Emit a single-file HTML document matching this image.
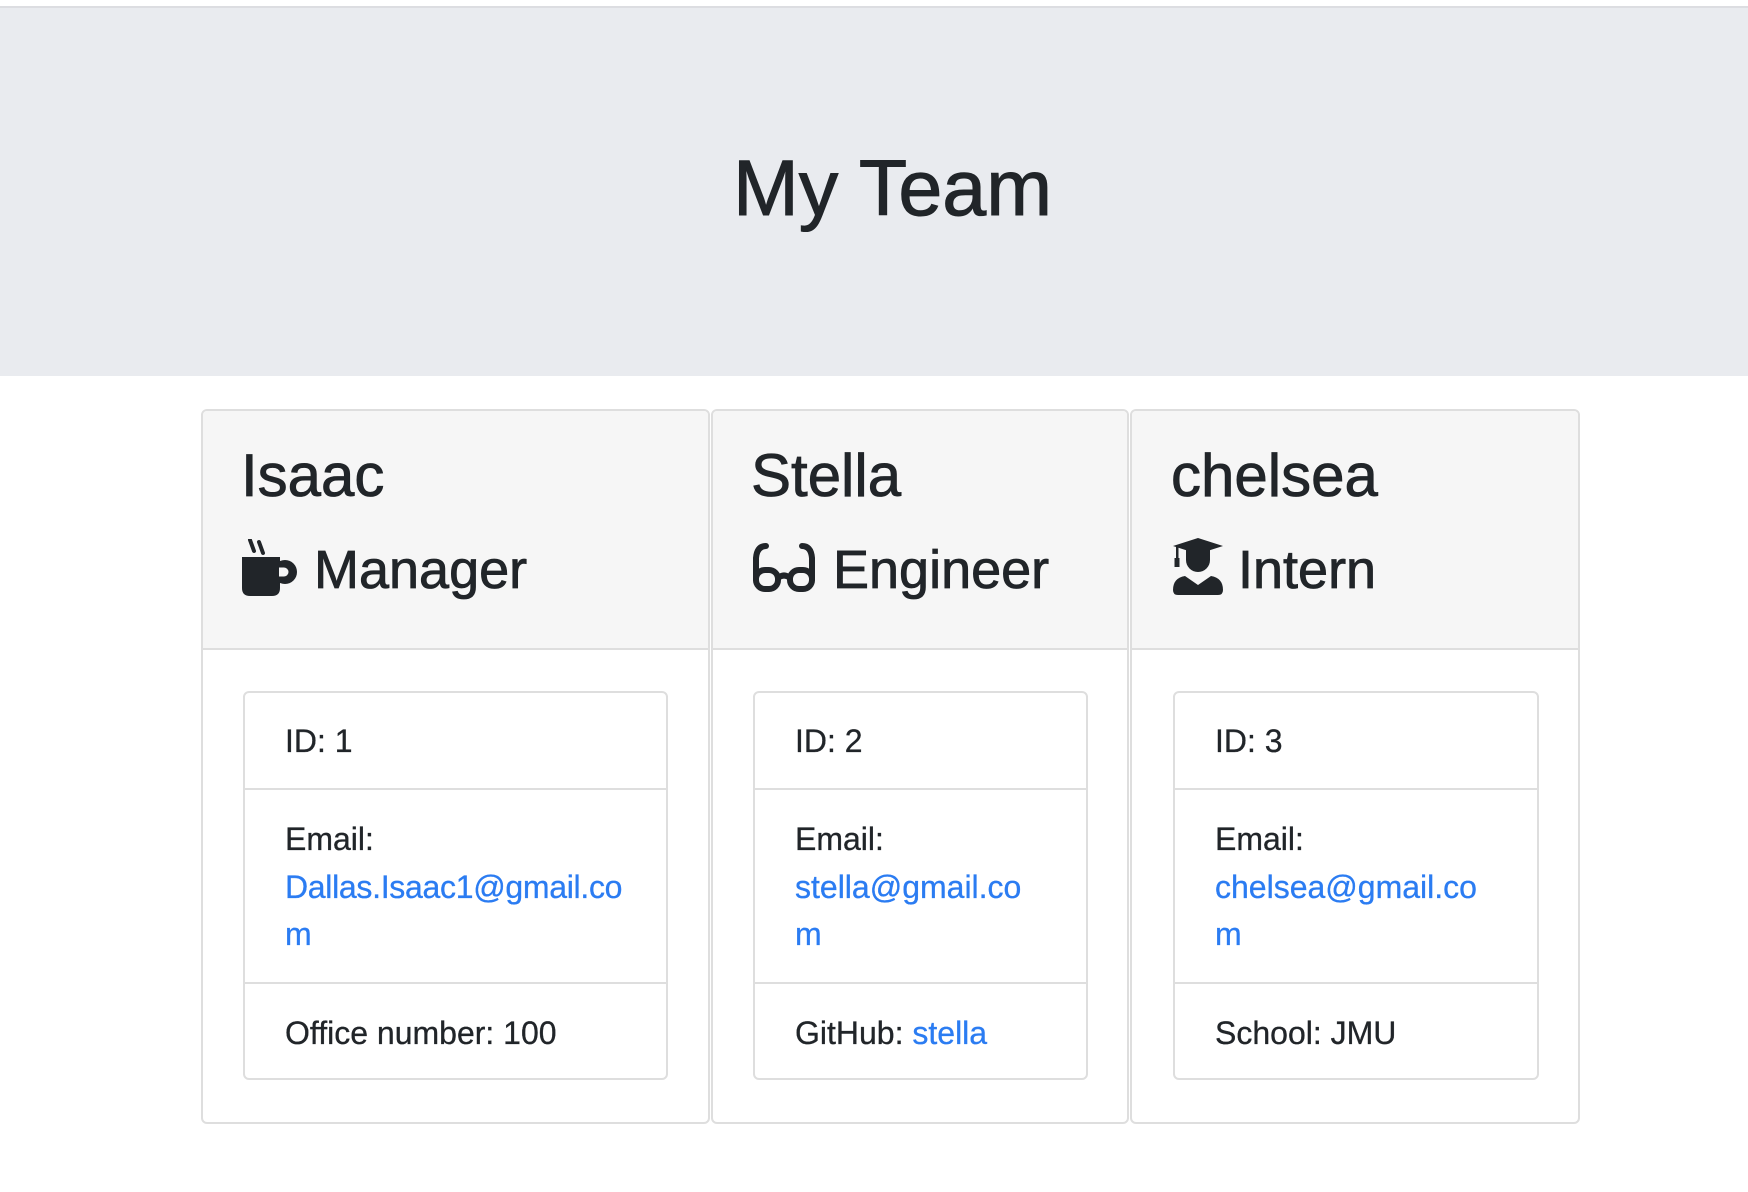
<!DOCTYPE html>
<html><head><meta charset="utf-8"><style>
*{margin:0;padding:0;box-sizing:border-box}
body{width:1748px;height:1192px;background:#fff;font-family:"Liberation Sans",Arial,sans-serif;color:#212529;position:relative;overflow:hidden}
.a{position:absolute;line-height:1;white-space:nowrap}
.jb{position:absolute;left:0;top:6px;width:1748px;height:370px;background:#e9ebef;border-top:2px solid #dcdde1}
.card{position:absolute;top:409px;height:715px;border:2px solid #dedede;border-radius:6px;background:#fff;overflow:hidden}
.hd{position:absolute;left:0;top:0;right:0;height:239px;background:#f6f6f6;border-bottom:2px solid #dedede}
.lst{position:absolute;top:691px;height:389px;border:2px solid #dedede;border-radius:6px}
.sep{position:absolute;height:2px;background:#dedede}
.n{font-size:60px;-webkit-text-stroke:0.8px #212529}
.r{font-size:54px;-webkit-text-stroke:0.8px #212529}
.t{font-size:32px;-webkit-text-stroke:0.3px currentColor}
.l{color:#2b7cf2}
</style></head><body>
<div class="jb"></div>
<div class="a" style="left:733px;top:148px;font-size:79px;-webkit-text-stroke:1px #212529">My Team</div>

<div class="card" style="left:201px;width:509px"><div class="hd"></div></div>
<div class="card" style="left:711px;width:418px"><div class="hd"></div></div>
<div class="card" style="left:1130px;width:450px"><div class="hd"></div></div>

<div class="a n" style="left:241px;top:446px">Isaac</div>
<div class="a n" style="left:751px;top:446px">Stella</div>
<div class="a n" style="left:1171px;top:446px">chelsea</div>

<svg style="position:absolute;left:242px;top:539px" width="56" height="57" viewBox="0 0 56 57">
<path d="M8 1 L12 12 M17 3 L21 14" stroke="#212529" stroke-width="4" stroke-linecap="round" fill="none"/>
<path d="M0 18 H38 V49 Q38 57 30 57 H8 Q0 57 0 49 Z" fill="#212529"/>
<circle cx="43" cy="33" r="12" fill="#212529"/><circle cx="42" cy="33" r="4.5" fill="#f6f6f6"/><rect x="37" y="28.5" width="5" height="9" fill="#f6f6f6"/>
</svg>
<div class="a r" style="left:314px;top:543px">Manager</div>

<svg style="position:absolute;left:752px;top:542px" width="64" height="51" viewBox="0 0 64 51">
<g stroke="#212529" stroke-width="6" fill="none" stroke-linecap="round">
<path d="M14 4 Q5 4 4 16 L4 38"/><path d="M50 4 Q59 4 60 16 L60 38"/>
<rect x="4" y="28" width="22" height="19" rx="9"/><rect x="38" y="28" width="22" height="19" rx="9"/>
<path d="M26 36 Q32 31 38 36"/>
</g></svg>
<div class="a r" style="left:833px;top:543px">Engineer</div>

<svg style="position:absolute;left:1173px;top:538px" width="50" height="58" viewBox="0 0 50 58">
<path d="M25 0 L50 8 L25 16 L0 8 Z" fill="#212529"/>
<rect x="3" y="8" width="2.5" height="16" fill="#212529"/><rect x="1.5" y="20" width="5" height="9" fill="#212529"/>
<path d="M13 12 H37 V22 A12 12 0 0 1 13 22 Z" fill="#212529"/>
<path d="M0 52 Q0 40 12 38 L25 47 L38 38 Q50 40 50 52 Q50 57 45 57 H5 Q0 57 0 52 Z" fill="#212529"/>
</svg>
<div class="a r" style="left:1238px;top:543px">Intern</div>

<div class="lst" style="left:243px;width:425px"></div>
<div class="sep" style="left:245px;width:421px;top:788px"></div>
<div class="sep" style="left:245px;width:421px;top:982px"></div>
<div class="lst" style="left:753px;width:335px"></div>
<div class="sep" style="left:755px;width:331px;top:788px"></div>
<div class="sep" style="left:755px;width:331px;top:982px"></div>
<div class="lst" style="left:1173px;width:366px"></div>
<div class="sep" style="left:1175px;width:362px;top:788px"></div>
<div class="sep" style="left:1175px;width:362px;top:982px"></div>

<div class="a t" style="left:285px;top:725px">ID: 1</div>
<div class="a t" style="left:285px;top:823px">Email:</div>
<div class="a t l" style="left:285px;top:871px;letter-spacing:-0.3px">Dallas.Isaac1@gmail.co</div>
<div class="a t l" style="left:285px;top:918px">m</div>
<div class="a t" style="left:285px;top:1017px">Office number: 100</div>

<div class="a t" style="left:795px;top:725px">ID: 2</div>
<div class="a t" style="left:795px;top:823px">Email:</div>
<div class="a t l" style="left:795px;top:871px">stella@gmail.co</div>
<div class="a t l" style="left:795px;top:918px">m</div>
<div class="a t" style="left:795px;top:1017px">GitHub: <span class="l">stella</span></div>

<div class="a t" style="left:1215px;top:725px">ID: 3</div>
<div class="a t" style="left:1215px;top:823px">Email:</div>
<div class="a t l" style="left:1215px;top:871px">chelsea@gmail.co</div>
<div class="a t l" style="left:1215px;top:918px">m</div>
<div class="a t" style="left:1215px;top:1017px">School: JMU</div>
</body></html>
